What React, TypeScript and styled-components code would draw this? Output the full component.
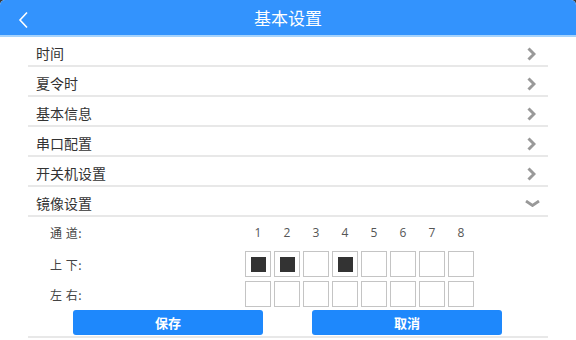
import styled, { createGlobalStyle } from "styled-components";

const GlobalStyle = createGlobalStyle`
  html, body {
    margin: 0;
    padding: 0;
    background: #3a3a3a;
  }
  body {
    font-family: "Noto Sans CJK SC", "Noto Sans", sans-serif;
  }
`;

const Page = styled.div`
  width: 576px;
  height: 340px;
  background: #fff;
  border-radius: 5px 5px 0 0;
  overflow: hidden;
`;

const Header = styled.div`
  height: 35px;
  background: #3393fd;
  border-bottom: 2px solid #a6d3fc;
  display: flex;
  align-items: center;
  justify-content: center;
  position: relative;
  color: #fff;
  font-size: 17px;
`;

const Back = styled.div`
  position: absolute;
  left: 17px;
  top: 9px;
  width: 14px;
  height: 18px;
`;

const List = styled.div`
  margin: 0 28px;
`;

const Row = styled.div`
  height: 24px;
  padding: 4px 0 0 8px;
  border-bottom: 2px solid #e8e8e8;
  display: flex;
  align-items: center;
  justify-content: space-between;
  font-size: 14px;
  color: #333;
`;

const Arrow = styled.div<{ $right: number; $dy: number }>`
  display: flex;
  align-items: center;
  justify-content: center;
  margin-right: ${(p) => p.$right}px;
  margin-top: ${(p) => p.$dy}px;
`;

const Mirror = styled.div`
  border-bottom: 2px solid #e8e8e8;
  padding-bottom: 1px;
`;

const Line = styled.div<{ $h: number; $mt?: number }>`
  display: flex;
  align-items: center;
  height: ${(p) => p.$h}px;
  margin-top: ${(p) => p.$mt ?? 0}px;
`;

const Label = styled.div`
  width: 217px;
  padding-left: 22px;
  box-sizing: border-box;
  font-size: 12px;
  color: #444;
  letter-spacing: 0.5px;
`;

const Cells = styled.div`
  display: flex;
  gap: 3px;
`;

const Num = styled.div`
  width: 26px;
  text-align: center;
  font-size: 12px;
  color: #555;
  font-family: "Open Sans", sans-serif;
`;

const Box = styled.div<{ $on?: boolean }>`
  width: 26px;
  height: 26px;
  box-sizing: border-box;
  border: 1px solid #c4c4c4;
  display: flex;
  align-items: center;
  justify-content: center;
  &::after {
    content: "";
    width: 15px;
    height: 15px;
    background: ${(p) => (p.$on ? "#333" : "transparent")};
  }
`;

const Buttons = styled.div`
  display: flex;
  margin-top: 3px;
  padding-left: 45px;
  gap: 49px;
`;

const Button = styled.div`
  width: 190px;
  height: 25px;
  border-radius: 3px;
  background: #1e88fc;
  color: #fff;
  font-weight: 700;
  font-size: 13px;
  display: flex;
  align-items: center;
  justify-content: center;
`;

const Chevron = () => (
  <svg width="9" height="14" viewBox="0 0 9 14">
    <path d="M1.5 1.5 L7 7 L1.5 12.5" fill="none" stroke="#999" strokeWidth="3" />
  </svg>
);

const ChevronDown = () => (
  <svg width="15" height="7" viewBox="0 0 15 7">
    <path d="M1 1 L7.5 5.5 L14 1" fill="none" stroke="#999" strokeWidth="2.8" />
  </svg>
);

const items = ["时间", "夏令时", "基本信息", "串口配置", "开关机设置"];
const upDown = [true, true, false, true, false, false, false, false];
const leftRight = [false, false, false, false, false, false, false, false];

export default function App() {
  return (
    <Page>
      <GlobalStyle />
      <Header>
        <Back>
          <svg width="14" height="18" viewBox="0 0 14 18">
            <path d="M10 1.5 L3 9 L10 16.5" fill="none" stroke="#fff" strokeWidth="1.6" />
          </svg>
        </Back>
        基本设置
      </Header>
      <List>
        {items.map((t) => (
          <Row key={t}>
            {t}
            <Arrow $right={12} $dy={2}>
              <Chevron />
            </Arrow>
          </Row>
        ))}
        <Row>
          镜像设置
          <Arrow $right={8} $dy={1}>
            <ChevronDown />
          </Arrow>
        </Row>
        <Mirror>
          <Line $h={30}>
            <Label>通 道:</Label>
            <Cells>
              {[1, 2, 3, 4, 5, 6, 7, 8].map((n) => (
                <Num key={n}>{n}</Num>
              ))}
            </Cells>
          </Line>
          <Line $h={26} $mt={4}>
            <Label>上 下:</Label>
            <Cells>
              {upDown.map((on, i) => (
                <Box key={i} $on={on} />
              ))}
            </Cells>
          </Line>
          <Line $h={26} $mt={4}>
            <Label>左 右:</Label>
            <Cells>
              {leftRight.map((on, i) => (
                <Box key={i} $on={on} />
              ))}
            </Cells>
          </Line>
          <Buttons>
            <Button>保存</Button>
            <Button>取消</Button>
          </Buttons>
        </Mirror>
      </List>
    </Page>
  );
}
